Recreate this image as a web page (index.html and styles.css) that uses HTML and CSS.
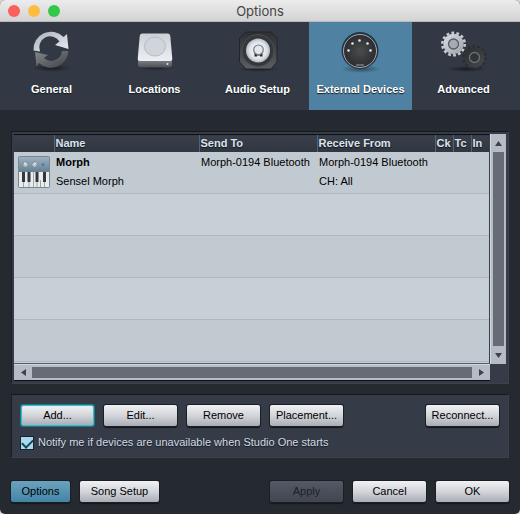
FILE: index.html
```html
<!DOCTYPE html>
<html lang="en">
<head>
<meta charset="utf-8">
<meta name="viewport" content="width=device-width, initial-scale=1">
<title>Options</title>
<link rel="stylesheet" href="styles.css">
</head>
<body>
<div class="window">
  <header class="titlebar">
    <div class="lights">
      <button class="light light-close" aria-label="Close"></button>
      <button class="light light-minimize" aria-label="Minimize"></button>
      <button class="light light-zoom" aria-label="Zoom"></button>
    </div>
    <h1 class="title">Options</h1>
  </header>

  <nav class="tabs">
    <button class="tab">
      <svg class="tab-icon" viewBox="0 0 48 48" aria-hidden="true">
        <defs>
          <linearGradient id="arrowLight" x1="0" y1="0" x2="1" y2="1"><stop offset="0" stop-color="#a9b0b7"/><stop offset="1" stop-color="#e9eef3"/></linearGradient>
          <linearGradient id="arrowDark" x1="0" y1="0" x2="1" y2="1"><stop offset="0" stop-color="#85888b"/><stop offset="1" stop-color="#3f4144"/></linearGradient>
          <radialGradient id="floor"><stop offset="0" stop-color="#15181e" stop-opacity=".9"/><stop offset="1" stop-color="#15181e" stop-opacity="0"/></radialGradient>
        </defs>
        <ellipse cx="24" cy="41" rx="20" ry="4" fill="url(#floor)"/>
        <path d="M40.500 24A17.500 17.500 0 0 1 11 36L8.500 39.500L7 25L20 28L16 31A10.800 10.800 0 0 0 34 24Z" fill="url(#arrowDark)"/>
        <path d="M5.500 23.500A17.500 17.500 0 0 1 35.500 10L39 7L40.500 22L27 18L31.500 14.500A11 11 0 0 0 12 24.500Z" fill="url(#arrowLight)"/>
      </svg>
      <span>General</span>
    </button>
    <button class="tab">
      <svg class="tab-icon" viewBox="0 0 48 48" aria-hidden="true">
        <defs>
          <linearGradient id="driveTop" x1="0" y1="0" x2="0" y2="1"><stop offset="0" stop-color="#cbd0d6"/><stop offset="1" stop-color="#eceff3"/></linearGradient>
          <linearGradient id="driveFront" x1="0" y1="0" x2="0" y2="1"><stop offset="0" stop-color="#85898e"/><stop offset="1" stop-color="#4c4f53"/></linearGradient>
        </defs>
        <ellipse cx="24" cy="40" rx="20" ry="4" fill="url(#floor)"/>
        <path d="M7 32H41V38Q41 40.500 38 40.500H10Q7 40.500 7 38Z" fill="url(#driveFront)"/>
        <path d="M11 6.500H37Q39 6.500 39.300 9L41.300 32Q41.300 34 39 34H9Q6.700 34 6.700 32L8.700 9Q9 6.500 11 6.500Z" fill="url(#driveTop)"/>
        <ellipse cx="24" cy="19.500" rx="10.500" ry="9.500" fill="#cfd5da" stroke="#b6bdc2" stroke-width="1"/>
        <circle cx="36.500" cy="37" r="1" fill="#e4e8ec"/>
      </svg>
      <span>Locations</span>
    </button>
    <button class="tab">
      <svg class="tab-icon" viewBox="0 0 48 48" aria-hidden="true">
        <defs>
          <radialGradient id="cone"><stop offset="0" stop-color="#fff"/><stop offset=".7" stop-color="#dfe5ec"/><stop offset="1" stop-color="#b4b9c0"/></radialGradient>
          <linearGradient id="speakerBox" x1="0" y1="0" x2="0" y2="1"><stop offset="0" stop-color="#2d2f32"/><stop offset="1" stop-color="#5b5e62"/></linearGradient>
        </defs>
        <ellipse cx="24" cy="42" rx="20" ry="3" fill="url(#floor)"/>
        <path d="M12 5H37L43 11V35L37 42H12L5.500 35V11Z" fill="url(#speakerBox)" stroke="#22252a"/>
        <circle cx="24" cy="23.500" r="16" fill="#35383b" stroke="#4b4e52"/>
        <circle cx="24" cy="23.500" r="12" fill="url(#cone)"/>
        <path d="M20.500 26V29.500H23V28.500H26V29.500H28.500V26Z" fill="#292c30"/>
        <circle cx="24.500" cy="22.800" r="4.800" fill="#e3e6ea" stroke="#777c82" stroke-width="1.200"/>
      </svg>
      <span>Audio Setup</span>
    </button>
    <button class="tab tab-active" aria-current="page">
      <svg class="tab-icon" viewBox="0 0 48 48" aria-hidden="true">
        <defs>
          <radialGradient id="socket"><stop offset="0" stop-color="#4a4d4e"/><stop offset="1" stop-color="#2a2c2f"/></radialGradient>
        </defs>
        <ellipse cx="24" cy="42" rx="20" ry="4" fill="url(#floor)" opacity=".6"/>
        <circle cx="23" cy="23.500" r="18.500" fill="#273543"/>
        <circle cx="23" cy="24" r="16.500" fill="url(#socket)" stroke="#a2a8ad" stroke-width="1"/>
        <g fill="#e2e6e9"><circle cx="11.500" cy="23.500" r="1.300"/><circle cx="15.500" cy="16.500" r="1.300"/><circle cx="22.500" cy="13.500" r="1.300"/><circle cx="30.500" cy="16.500" r="1.300"/><circle cx="33.500" cy="23.500" r="1.300"/></g>
        <path d="M19 38H27" stroke="#777c80" stroke-width="1.500"/>
      </svg>
      <span>External Devices</span>
    </button>
    <button class="tab">
      <svg class="tab-icon" viewBox="0 0 48 48" aria-hidden="true">
        <defs>
          <linearGradient id="gearLight" x1="0" y1="0" x2="1" y2="1"><stop offset="0" stop-color="#dce0e5"/><stop offset="1" stop-color="#9ca1a7"/></linearGradient>
          <linearGradient id="gearDark" x1="0" y1="0" x2="1" y2="1"><stop offset="0" stop-color="#2a2c2f"/><stop offset="1" stop-color="#47494c"/></linearGradient>
        </defs>
        <ellipse cx="26" cy="42" rx="21" ry="3" fill="url(#floor)"/>
        <circle cx="13.500" cy="17" r="11.200" fill="none" stroke="#c5cad0" stroke-width="2.600" stroke-dasharray="2.800 2.230"/>
        <circle cx="13.500" cy="17" r="10.200" fill="url(#gearLight)"/>
        <circle cx="13.500" cy="17" r="5" fill="#a5abb2" stroke="#555c65" stroke-width="1.300"/>
        <circle cx="34.500" cy="30.500" r="11" fill="none" stroke="#2a2c2f" stroke-width="2.600" stroke-dasharray="2.800 2.137"/>
        <circle cx="34.500" cy="30.500" r="10.200" fill="url(#gearDark)"/>
        <circle cx="34.500" cy="30.500" r="5" fill="#303338" stroke="#6c7176" stroke-width="1.300"/>
      </svg>
      <span>Advanced</span>
    </button>
  </nav>

  <main class="content">
    <section class="panel device-panel" aria-label="External devices">
      <div class="list">
        <table class="devices">
          <colgroup>
            <col class="col-icon"><col class="col-name"><col class="col-port"><col class="col-port"><col class="col-flag"><col class="col-flag"><col class="col-flag">
          </colgroup>
          <thead>
            <tr><th></th><th>Name</th><th>Send To</th><th>Receive From</th><th>Ck</th><th>Tc</th><th>In</th></tr>
          </thead>
          <tbody>
            <tr>
              <td class="icon-cell">
                <svg class="device-icon" viewBox="0 0 32 32" aria-hidden="true">
                  <defs><linearGradient id="synth" x1="0" y1="0" x2="0" y2="1"><stop offset="0" stop-color="#9db1bf"/><stop offset="1" stop-color="#668092"/></linearGradient></defs>
                  <rect x="0" y="0" width="32" height="32" rx="2" fill="#7b8790"/>
                  <rect x="1" y="1" width="30" height="15" fill="url(#synth)"/>
                  <rect x="1" y="16" width="30" height="15" fill="#e9eced"/>
                  <g fill="#bac7cf" stroke="#7b8d99"><circle cx="7.500" cy="8.500" r="2.700"/><circle cx="16.500" cy="8.500" r="2.700"/></g>
                  <path d="M7.500 8.500L6.500 6.500M16.500 8.500L18 6.500" stroke="#fff"/>
                  <circle cx="25" cy="8.500" r="1.500" fill="#3983b5"/>
                  <path d="M5.500 24V31M11 24V31M15.500 16V31M19 24V31M22.500 24V31M26.500 24V31" stroke="#a0a5a8"/>
                  <path d="M4 16H7V26H4ZM9.500 16H12.500V26H9.500ZM17.500 16H20.500V26H17.500ZM25 16H28V26H25Z" fill="#34383c"/>
                </svg>
              </td>
              <td><strong>Morph</strong><br>Sensel Morph</td>
              <td>Morph-0194 Bluetooth</td>
              <td>Morph-0194 Bluetooth<br>CH: All</td>
              <td></td><td></td><td></td>
            </tr>
            <tr><td colspan="7"></td></tr>
            <tr><td colspan="7"></td></tr>
            <tr><td colspan="7"></td></tr>
            <tr><td colspan="7"></td></tr>
          </tbody>
        </table>
      </div>
      <div class="scroll scroll-y">
        <button class="scroll-step" aria-label="Scroll up"><svg class="arrow" viewBox="0 0 7 7"><path d="M3.500 1L7 6H0Z"/></svg></button>
        <div class="thumb"></div>
        <button class="scroll-step" aria-label="Scroll down"><svg class="arrow" viewBox="0 0 7 7"><path d="M0 1H7L3.500 6Z"/></svg></button>
      </div>
      <div class="scroll scroll-x">
        <button class="scroll-step" aria-label="Scroll left"><svg class="arrow" viewBox="0 0 7 7"><path d="M1 3.500L6 0V7Z"/></svg></button>
        <div class="thumb"></div>
        <button class="scroll-step" aria-label="Scroll right"><svg class="arrow" viewBox="0 0 7 7"><path d="M1 0L6 3.500L1 7Z"/></svg></button>
      </div>
    </section>

    <section class="panel actions" aria-label="Device actions">
      <div class="button-row">
        <button class="btn btn-focus">Add...</button>
        <button class="btn">Edit...</button>
        <button class="btn">Remove</button>
        <button class="btn">Placement...</button>
        <button class="btn push">Reconnect...</button>
      </div>
      <div class="notify">
        <input class="check" type="checkbox" id="notify" checked>
        <label for="notify">Notify me if devices are unavailable when Studio One starts</label>
      </div>
    </section>
  </main>

  <footer class="footer">
    <button class="btn btn-on">Options</button>
    <button class="btn btn-wide">Song Setup</button>
    <button class="btn push" disabled>Apply</button>
    <button class="btn">Cancel</button>
    <button class="btn">OK</button>
  </footer>
</div>
</body>
</html>
```
FILE: styles.css
```css
* {
  box-sizing: border-box;
}

body {
  margin: 0;
  background: #d9dad8;
  font: 11px/19px "Liberation Sans", Arial, sans-serif;
  color: #000;
}

button {
  margin: 0;
  padding: 0;
  border: 0;
  font: inherit;
  color: inherit;
}

svg {
  display: block;
}

.window {
  display: flex;
  flex-direction: column;
  min-height: 100vh;
  overflow: hidden;
  border-radius: 5px;
  background: #252930;
}

/* Title bar */
.titlebar {
  display: grid;
  grid-template-columns: 1fr auto 1fr;
  align-items: center;
  height: 22px;
  padding: 0 8px;
  background: linear-gradient(#ececec, #d3d3d3);
  border-bottom: 1px solid #b9babb;
}

.lights {
  display: flex;
  gap: 8px;
}

.light {
  width: 12px;
  height: 12px;
  border-radius: 50%;
}

.light-close { background: #fc605c; }
.light-minimize { background: #fdbc40; }
.light-zoom { background: #34c84a; }

.title {
  margin: 0;
  font: 13px/20px Inter, "Liberation Sans", sans-serif;
  color: #444;
}

/* Section tabs */
.tabs {
  display: grid;
  grid-template-columns: repeat(5, 1fr);
  height: 88px;
  padding-right: 5px;
  background: #333944;
}

.tab {
  display: flex;
  flex-direction: column;
  align-items: center;
  gap: 7px;
  padding-top: 5px;
  background: none;
  color: #fff;
  font-weight: bold;
  line-height: 14px;
  text-shadow: 0 1px 1px #14181f;
}

.tab-active {
  background: #4f82a2;
}

.tab-icon {
  width: 48px;
  height: 48px;
}

/* Panels */
.content {
  display: flex;
  flex-direction: column;
  gap: 10px;
  padding: 21px 11px 0;
}

.panel {
  border: 1px solid #3c424d;
  border-top-color: #15181d;
  border-left-color: #1a1d23;
  background: #363c47;
}

.device-panel {
  display: grid;
  grid-template-columns: 1fr 16px;
  grid-template-rows: 230px 17px;
  padding: 2px;
}

.list {
  overflow: hidden;
  border-right: 1px solid #3a3f48;
  border-bottom: 1px solid #555b64;
  background: #c6ced6;
}

.devices {
  width: 100%;
  table-layout: fixed;
  border-collapse: collapse;
}

.col-icon { width: 40px; }
.col-name { width: 145px; }
.col-port { width: 118px; }

.devices th {
  height: 17px;
  padding: 0 0 0 1px;
  border-left: 1px solid #5b616b;
  border-top: 1px solid #101216;
  background: linear-gradient(#3a404b, #303640);
  color: #dbe3ec;
  line-height: 16px;
  text-align: left;
  text-shadow: 0 1px 1px #14181f;
}

.devices th:first-child {
  border-left: 0;
}

.devices td {
  height: 42px;
  padding: 1px 0 0 2px;
  border-bottom: 1px solid #b0b7be;
  vertical-align: top;
  white-space: nowrap;
}

.devices .icon-cell {
  padding: 4px 0 0 4px;
}

.devices tbody tr:nth-child(odd) { background: #c2cad1; }
.devices tbody tr:nth-child(even) { background: #c7cfd7; }

.device-icon {
  width: 32px;
  height: 32px;
}

/* Scroll bars */
.scroll {
  display: flex;
  background: #b5bcc5;
}

.scroll-y {
  flex-direction: column;
  border-left: 1px solid #d3d8dd;
}

.scroll-x {
  border-top: 1px solid #d3d8dd;
  border-bottom: 1px solid #0c0e11;
}

.scroll-step {
  display: flex;
  align-items: center;
  justify-content: center;
  flex: 0 0 18px;
  background: none;
}

.thumb {
  flex: 1;
  background: #666c73;
}

.scroll-y .thumb {
  margin: 0 2px;
}

.scroll-x .thumb {
  margin: 2px 0;
}

.arrow {
  width: 7px;
  height: 7px;
  fill: #3d434b;
}

/* Buttons */
.btn {
  width: 73px;
  height: 21px;
  border-radius: 2px;
  background: linear-gradient(#f0f1f4, #d3d5da 50%, #a9adb5);
  box-shadow: 0 0 0 1px #1b1e23, 0 2px 1px #15171b;
  line-height: 21px;
}

.btn-focus {
  border: 1px solid #35bdce;
  box-shadow: 0 0 0 1px #247681, inset 0 0 1px #58dbe8;
  line-height: 19px;
}

.btn-on {
  width: 59px;
  background: linear-gradient(#6ba3be, #4384a6);
}

.btn-wide {
  width: 79px;
}

.btn:disabled {
  background: linear-gradient(#535965, #414650);
  color: #1d2025;
}

.push {
  margin-left: auto;
}

.actions {
  padding: 10px 9px 5px;
}

.button-row {
  display: flex;
  gap: 10px;
}

.notify {
  display: flex;
  align-items: center;
  gap: 5px;
  margin-top: 7px;
  height: 19px;
  color: #d2dbe6;
  text-shadow: 0 1px 1px #14181f;
}

.check {
  display: grid;
  place-items: center;
  width: 12px;
  height: 12px;
  margin: 0;
  appearance: none;
  background: #a5dbef;
  box-shadow: 0 0 0 1px #1d2228;
}

.check:checked::before {
  content: "";
  width: 9px;
  height: 5px;
  border: solid #1c4354;
  border-width: 0 0 2px 2px;
  transform: rotate(-45deg);
}

.footer {
  display: flex;
  gap: 10px;
  padding: 23px 11px 11px;
}
```
